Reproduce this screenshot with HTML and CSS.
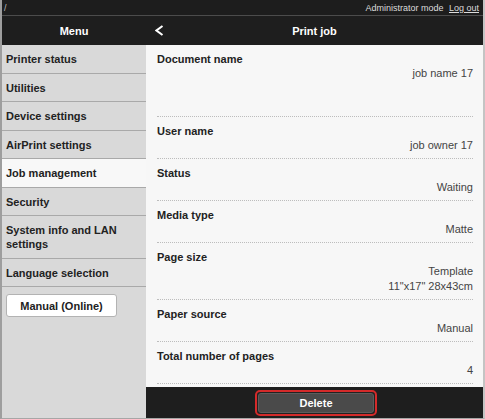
FILE: index.html
```html
<!DOCTYPE html>
<html lang="en">
<head>
<meta charset="utf-8">
<title>Print job</title>
<link rel="stylesheet" href="styles.css">
</head>
<body>
<div class="frame">
  <div class="topbar">
    <span class="crumb">/</span>
    <span class="admin">Administrator mode <a class="logout" href="#">Log out</a></span>
  </div>
  <div class="layout">
    <aside class="sidebar">
      <div class="side-head">Menu</div>
      <nav class="nav">
        <div class="nav-item">Printer status</div>
        <div class="nav-item">Utilities</div>
        <div class="nav-item">Device settings</div>
        <div class="nav-item">AirPrint settings</div>
        <div class="nav-item active">Job management</div>
        <div class="nav-item">Security</div>
        <div class="nav-item">System info and LAN settings</div>
        <div class="nav-item">Language selection</div>
      </nav>
      <div class="manual-wrap"><button class="manual">Manual (Online)</button></div>
    </aside>
    <main class="main">
      <div class="main-head">
        <svg class="back" width="9" height="11" viewBox="0 0 9 11"><polyline points="7.5,1 1.5,5.5 7.5,10" fill="none" stroke="#ffffff" stroke-width="2" stroke-linejoin="miter"/></svg>
        <span class="title">Print job</span>
        <span></span>
      </div>
      <div class="rows">
        <div class="row first">
          <div class="label">Document name</div>
          <div class="value">job name 17</div>
        </div>
        <div class="row">
          <div class="label">User name</div>
          <div class="value">job owner 17</div>
        </div>
        <div class="row">
          <div class="label">Status</div>
          <div class="value">Waiting</div>
        </div>
        <div class="row">
          <div class="label">Media type</div>
          <div class="value">Matte</div>
        </div>
        <div class="row">
          <div class="label">Page size</div>
          <div class="value multi">Template<br>11"x17" 28x43cm</div>
        </div>
        <div class="row">
          <div class="label">Paper source</div>
          <div class="value">Manual</div>
        </div>
        <div class="row">
          <div class="label">Total number of pages</div>
          <div class="value">4</div>
        </div>
      </div>
      <div class="action-bar">
        <span class="focus-ring"><button class="delete">Delete</button></span>
      </div>
    </main>
  </div>
</div>
</body>
</html>
```

FILE: styles.css
```css
* { box-sizing: border-box; }

html, body {
  margin: 0;
  padding: 0;
  background: #ffffff;
}

body {
  font-family: "Liberation Sans", Arial, sans-serif;
  font-size: 11px;
  color: #222222;
}

.frame {
  width: 485px;
  height: 419px;
  display: flex;
  flex-direction: column;
  border-left: 2px solid #9e9e9e;
  border-right: 2px solid #c4c4c4;
  border-bottom: 1px solid #a6a6a6;
  overflow: hidden;
}

.topbar {
  height: 16px;
  flex: 0 0 16px;
  background: #1d1d1d;
  border-bottom: 1px solid #4c4c4c;
  display: flex;
  justify-content: space-between;
  align-items: center;
  padding: 0 4px 0 2px;
  font-size: 9px;
  line-height: 10px;
  color: #dcdcdc;
}

.crumb { color: #bdbdbd; }

.logout {
  color: #dcdcdc;
  text-decoration: underline;
  margin-left: 3px;
}

.layout {
  flex: 1 1 auto;
  display: grid;
  grid-template-columns: 144px 1fr;
  min-height: 0;
}

.sidebar {
  background: #d9d9d9;
  display: flex;
  flex-direction: column;
}

.side-head,
.main-head {
  height: 29px;
  flex: 0 0 29px;
  background: #1e1e1e;
  color: #ffffff;
  font-weight: bold;
  font-size: 11px;
}

.side-head {
  display: flex;
  align-items: center;
  justify-content: center;
}

.nav-item {
  padding: 7px 4px 6.5px;
  line-height: 14px;
  font-weight: bold;
  border-bottom: 1px solid #a9a9a9;
  color: #222222;
}

.nav-item.active {
  background: #f8f8f8;
}

.manual-wrap {
  padding: 7px 0 0 4px;
}

.manual {
  width: 111px;
  height: 23px;
  background: #ffffff;
  border: 1px solid #b3b3b3;
  border-radius: 3px;
  font-family: inherit;
  font-size: 11px;
  font-weight: bold;
  color: #222222;
  padding: 0;
}

.main {
  background: #f7f7f7;
  display: flex;
  flex-direction: column;
  min-height: 0;
}

.main-head {
  display: grid;
  grid-template-columns: 1fr auto 1fr;
  align-items: center;
}

.back {
  justify-self: start;
  margin-left: 9px;
  display: block;
}

.title {
  text-align: center;
}

.rows {
  flex: 1 1 auto;
  padding: 0 10px 0 11px;
}

.row {
  padding: 7px 0 6px;
  border-bottom: 1px dotted #bdbdbd;
}

.row.first {
  padding-bottom: 36px;
}

.label {
  font-weight: bold;
  line-height: 14px;
  color: #222222;
}

.value {
  text-align: right;
  line-height: 14px;
  color: #444444;
}

.value.multi {
  line-height: 14.5px;
}

.action-bar {
  height: 31px;
  flex: 0 0 31px;
  background: #1e1e1e;
  display: flex;
  align-items: center;
  justify-content: center;
  padding-left: 3px;
}

.focus-ring {
  display: inline-flex;
  border: 2px solid #d42a2a;
  border-radius: 5px;
  padding: 1px;
  background: #222222;
}

.delete {
  width: 116px;
  height: 20px;
  background: #4a4a4a;
  border: 1px solid #5c5c5c;
  border-radius: 3px;
  color: #ffffff;
  font-family: inherit;
  font-size: 11px;
  font-weight: bold;
  padding: 0;
}
```
